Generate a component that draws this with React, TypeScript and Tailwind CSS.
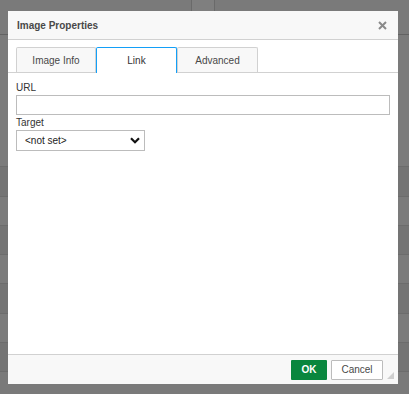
import React from "react";

// background rows behind the dialog overlay
const rows = [132, 30, 29, 29, 29, 30, 29, 29];

const Chevron = () => (
  <svg width="10" height="7" viewBox="0 0 10 7" className="shrink-0">
    <path d="M1 1.2 L5 5.2 L9 1.2" fill="none" stroke="#111" strokeWidth="2.2" />
  </svg>
);

const Tab: React.FC<{ label: string; active?: boolean; w: string }> = ({
  label,
  active,
  w,
}) => (
  <div
    className={
      active
        ? `${w} -mb-px flex h-[26px] items-center justify-center rounded-t-[2px] border border-b-0 border-[#139ff7] bg-white text-[#333]`
        : `${w} flex h-[25px] items-center justify-center rounded-t-[2px] border border-b-0 border-[#d1d1d1] bg-[#f8f8f8] text-[#484848]`
    }
  >
    {label}
  </div>
);

export default function App() {
  return (
    <div
      className="relative h-[394px] w-[409px] overflow-hidden bg-[#7a7a7a] text-[10px]"
      style={{ fontFamily: '"Liberation Sans", Arial, sans-serif' }}
    >
      {/* page behind */}
      <div className="flex flex-col">
        <div className="flex h-[35px] border-b border-[#626262]">
          <div className="w-[192px] border-r border-[#6a6a6a]" />
          <div className="w-[23px] border-r border-[#6a6a6a] bg-[#7f7f7f]" />
          <div className="flex-1" />
        </div>
        {rows.map((h, i) => (
          <div
            key={i}
            className={
              i % 2 === 1
                ? "border-b border-[#6c6c6c] bg-[#747474]"
                : "border-b border-[#6c6c6c] bg-[#7b7b7b]"
            }
            style={{ height: h }}
          />
        ))}
      </div>

      {/* dialog */}
      <div className="absolute left-[8px] top-[11px] flex h-[373px] w-[390px] flex-col bg-white">
        <div className="flex h-[29px] shrink-0 items-center justify-between border-b border-[#d1d1d1] bg-[#f8f8f8] pl-[9px] pr-[11px]">
          <span className="text-[10px] font-bold text-[#484848]">Image Properties</span>
          <svg width="9" height="9" viewBox="0 0 9 9">
            <path d="M1 1 L8 8 M8 1 L1 8" stroke="#8a8a8a" strokeWidth="2" />
          </svg>
        </div>

        <div className="flex flex-1 flex-col">
          <div className="mt-[7px] flex border-b border-[#d1d1d1] pl-[8px]">
            <Tab label="Image Info" w="w-[80px]" />
            <Tab label="Link" active w="w-[81px]" />
            <Tab label="Advanced" w="w-[81px]" />
          </div>

          <div className="flex flex-col px-[8px] pt-[8px] text-[#333]">
            <label className="leading-[13px]">URL</label>
            <input
              className="mt-[1px] h-[20px] w-full border border-[#bcbcbc] bg-white outline-none"
              type="text"
            />
            <label className="mt-[1px] leading-[13px]">Target</label>
            <div className="mt-[1px] flex h-[21px] w-[129px] items-center justify-between border border-[#bcbcbc] bg-white pl-[8px] pr-[4px]">
              <span className="text-[#222]">&lt;not set&gt;</span>
              <Chevron />
            </div>
          </div>
        </div>

        <div className="relative flex h-[30px] shrink-0 items-center justify-end gap-[4px] border-t border-[#d1d1d1] bg-[#f8f8f8] pr-[15px]">
          <button className="h-[20px] w-[36px] rounded-[1px] bg-[#09863e] font-bold text-white">
            OK
          </button>
          <button className="h-[20px] w-[52px] rounded-[1px] border border-[#bcbcbc] bg-white text-[#484848]">
            Cancel
          </button>
          <svg
            width="7"
            height="7"
            viewBox="0 0 7 7"
            className="absolute bottom-[5px] right-[4px]"
          >
            <path d="M7 0 L7 7 L0 7 Z" fill="#cfcfcf" />
          </svg>
        </div>
      </div>
    </div>
  );
}
